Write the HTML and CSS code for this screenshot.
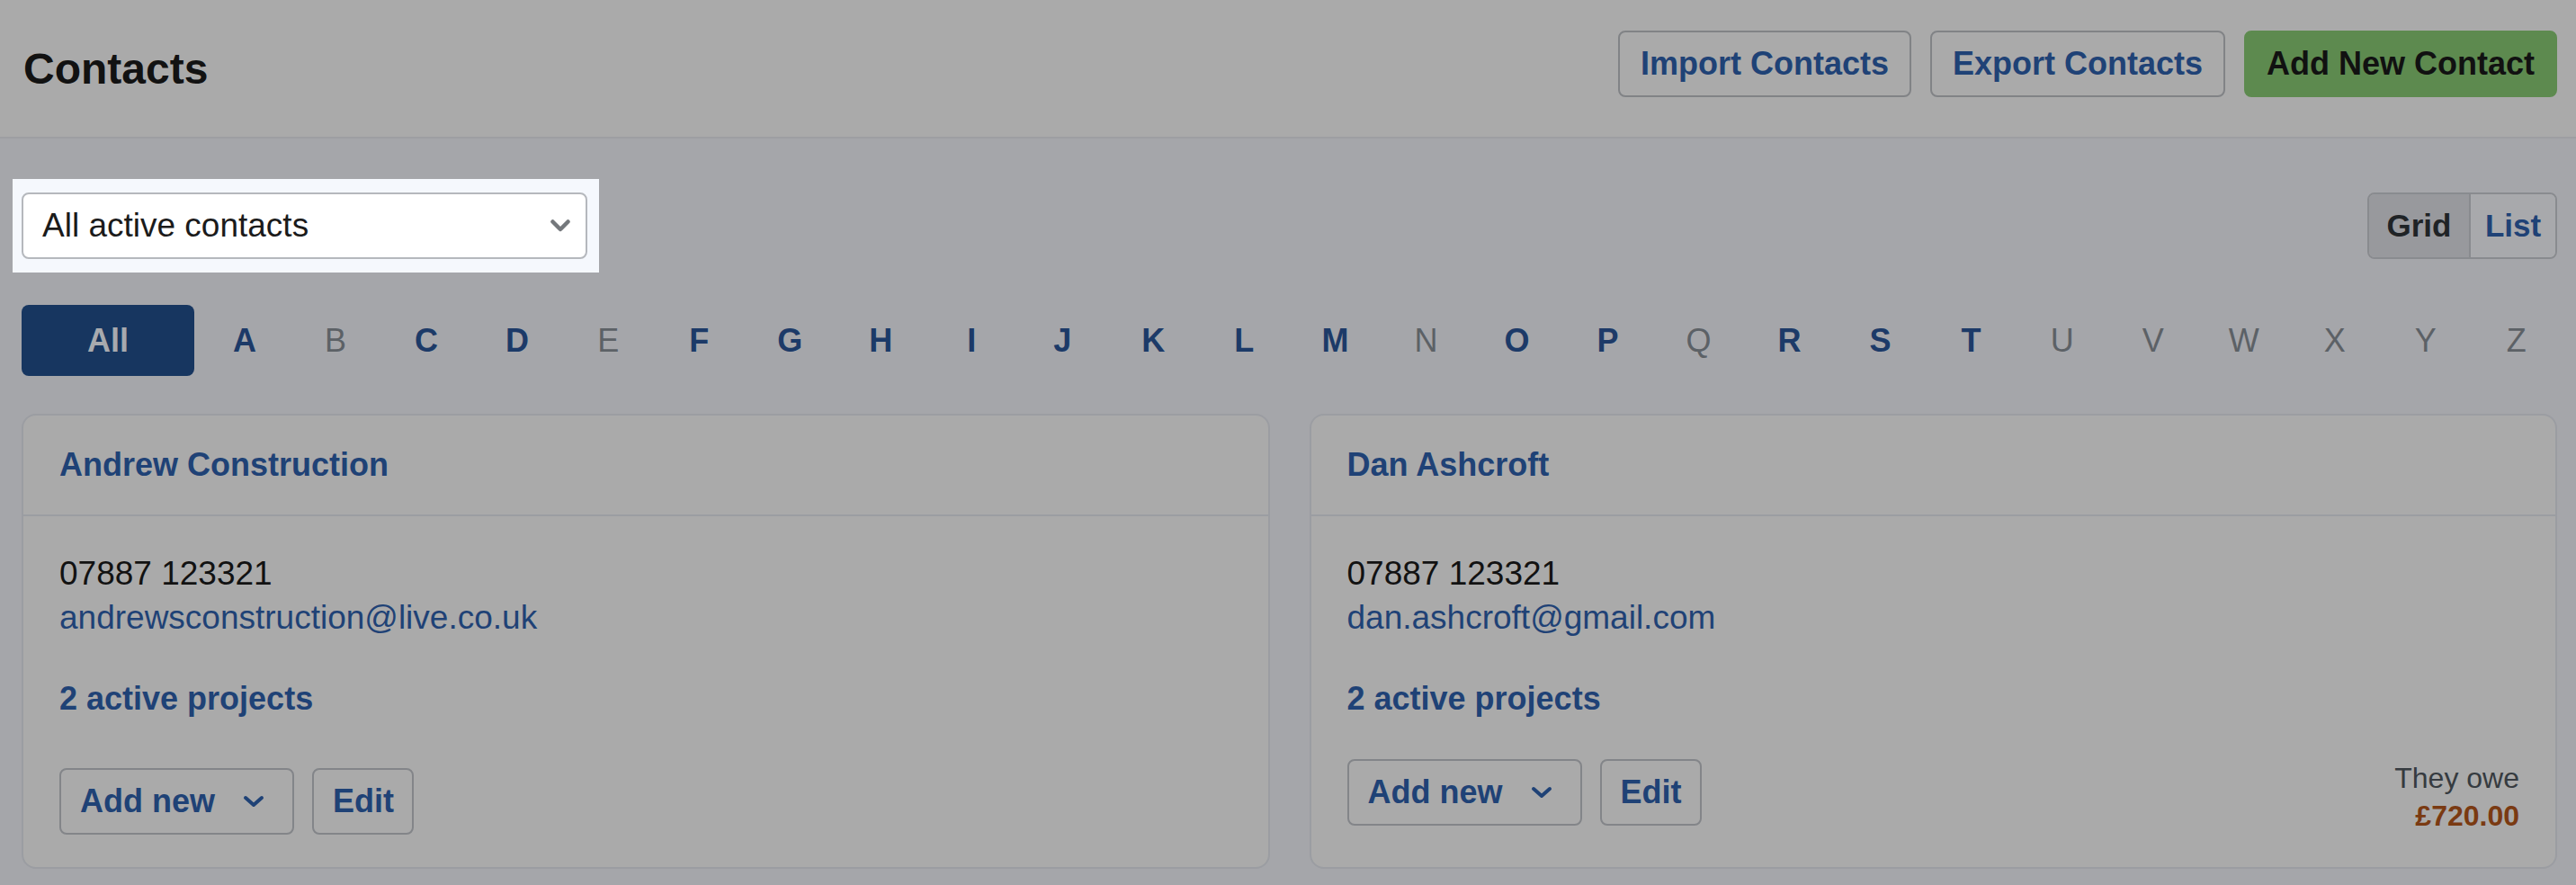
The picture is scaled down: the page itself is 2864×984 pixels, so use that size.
FILE: index.html
```html
<!DOCTYPE html>
<html lang="en">
<head>
<meta charset="utf-8">
<title>Contacts</title>
<link rel="stylesheet" href="styles.css">
</head>
<body>
<header class="topbar">
  <h1 class="title">Contacts</h1>
  <div class="actions">
    <button class="btn btn-outline">Import Contacts</button>
    <button class="btn btn-outline">Export Contacts</button>
    <button class="btn btn-green">Add New Contact</button>
  </div>
</header>
<main class="main">
  <div class="toolbar">
    <div class="spot">
      <div class="select">
        <span>All active contacts</span>
        <svg class="sel-chev" width="22" height="14" viewBox="0 0 22 14"><polyline points="2.5,2.5 11,11 19.5,2.5" fill="none" stroke="#74787c" stroke-width="4.5" stroke-linecap="round" stroke-linejoin="round"/></svg>
      </div>
    </div>
    <div class="toggle">
      <span class="tog tog-on">Grid</span>
      <span class="tog tog-off">List</span>
    </div>
  </div>
  <nav class="letters">
    <span class="all">All</span>
    <span class="letter">A</span>
    <span class="letter off">B</span>
    <span class="letter">C</span>
    <span class="letter">D</span>
    <span class="letter off">E</span>
    <span class="letter">F</span>
    <span class="letter">G</span>
    <span class="letter">H</span>
    <span class="letter">I</span>
    <span class="letter">J</span>
    <span class="letter">K</span>
    <span class="letter">L</span>
    <span class="letter">M</span>
    <span class="letter off">N</span>
    <span class="letter">O</span>
    <span class="letter">P</span>
    <span class="letter off">Q</span>
    <span class="letter">R</span>
    <span class="letter">S</span>
    <span class="letter">T</span>
    <span class="letter off">U</span>
    <span class="letter off">V</span>
    <span class="letter off">W</span>
    <span class="letter off">X</span>
    <span class="letter off">Y</span>
    <span class="letter off">Z</span>
  </nav>
  <section class="cards">
    <article class="card">
      <div class="card-head">Andrew Construction</div>
      <div class="card-body">
        <div class="phone">07887 123321</div>
        <div class="email">andrewsconstruction@live.co.uk</div>
        <div class="projects">2 active projects</div>
        <div class="foot">
          <div class="btns">
            <button class="sbtn">Add new
              <svg width="26" height="16" viewBox="0 0 26 16"><polyline points="4,4 13,12 22,4" fill="none" stroke="#1f4276" stroke-width="4" stroke-linecap="round" stroke-linejoin="round"/></svg>
            </button>
            <button class="sbtn sbtn-edit">Edit</button>
          </div>
        </div>
      </div>
    </article>
    <article class="card">
      <div class="card-head">Dan Ashcroft</div>
      <div class="card-body">
        <div class="phone">07887 123321</div>
        <div class="email">dan.ashcroft@gmail.com</div>
        <div class="projects">2 active projects</div>
        <div class="foot">
          <div class="btns">
            <button class="sbtn">Add new
              <svg width="26" height="16" viewBox="0 0 26 16"><polyline points="4,4 13,12 22,4" fill="none" stroke="#1f4276" stroke-width="4" stroke-linecap="round" stroke-linejoin="round"/></svg>
            </button>
            <button class="sbtn sbtn-edit">Edit</button>
          </div>
          <div class="owe">
            <div class="owe-label">They owe</div>
            <div class="owe-amount">£720.00</div>
          </div>
        </div>
      </div>
    </article>
  </section>
</main>
</body>
</html>
```
FILE: styles.css
```css
* { box-sizing: border-box; }
html, body { margin: 0; padding: 0; }
body {
  background: #a5a6aa;
  font-family: "Liberation Sans", Arial, sans-serif;
  color: #121212;
  width: 2864px;
  height: 984px;
  overflow: hidden;
}
button { font-family: inherit; }

.topbar {
  height: 154px;
  background: #aaaaaa;
  border-bottom: 2px solid #9d9ea2;
  display: flex;
  align-items: center;
  justify-content: space-between;
  padding: 0 21px 0 26px;
}
.title {
  margin: 0;
  font-size: 48px;
  font-weight: 700;
  color: #121212;
}
.actions {
  display: flex;
  gap: 21px;
  margin-bottom: 10px;
}
.btn {
  height: 74px;
  padding: 0 23px;
  font-size: 36px;
  font-weight: 700;
  border-radius: 8px;
  cursor: pointer;
}
.btn-outline {
  background: transparent;
  border: 2px solid #818386;
  color: #1f4276;
}
.btn-green {
  background: #5d8a4f;
  border: 2px solid #5d8a4f;
  color: #111111;
}

.main {
  padding: 60px 21px 0 24px;
}
.toolbar {
  display: flex;
  align-items: center;
  justify-content: space-between;
  height: 74px;
}
.spot {
  background: #f5f8fd;
  padding: 15px 13px 15px 10px;
  margin: -15px -13px -15px -10px;
}
.select {
  width: 629px;
  height: 74px;
  border: 2px solid #b5b8bd;
  border-radius: 8px;
  background: #ffffff;
  display: flex;
  align-items: center;
  justify-content: space-between;
  padding: 0 17px 0 21px;
  font-size: 37px;
  color: #1b1b1b;
}
.toggle {
  display: flex;
  height: 74px;
  border: 2px solid #898b8f;
  border-radius: 8px;
  overflow: hidden;
}
.tog {
  display: flex;
  align-items: center;
  justify-content: center;
  font-size: 35px;
  font-weight: 700;
}
.tog-on {
  width: 111px;
  background: #98999d;
  color: #1f2326;
}
.tog-off {
  width: 96px;
  color: #1f4276;
  border-left: 2px solid #898b8f;
  background: #a8a9ac;
}

.letters {
  margin-top: 51px;
  display: flex;
  gap: 11px;
  height: 79px;
}
.all {
  width: 192px;
  flex: none;
  background: #173660;
  border-radius: 8px;
  color: #a8aaae;
  font-size: 36px;
  font-weight: 700;
  display: flex;
  align-items: center;
  justify-content: center;
}
.letter {
  flex: 1;
  display: flex;
  align-items: center;
  justify-content: center;
  font-size: 36px;
  font-weight: 700;
  color: #1c3a68;
}
.letter.off {
  font-weight: 400;
  color: #5c6166;
}

.cards {
  margin-top: 42px;
  display: grid;
  grid-template-columns: 1fr 1fr;
  gap: 44px;
}
.card {
  background: #aaaaaa;
  border: 2px solid #9b9da2;
  border-radius: 16px;
  display: flex;
  flex-direction: column;
  height: 506px;
}
.card-head {
  height: 112px;
  padding: 0 40px;
  display: flex;
  align-items: center;
  border-bottom: 2px solid #9b9da2;
  font-size: 36px;
  font-weight: 700;
  color: #1f4276;
}
.card-body {
  flex: 1;
  display: flex;
  flex-direction: column;
  padding: 39px 40px 36px;
}
.phone, .email {
  font-size: 37px;
  line-height: 49px;
}
.phone { color: #121212; }
.email { color: #1f4276; }
.projects {
  margin-top: 41px;
  margin-bottom: 32px;
  font-size: 36px;
  line-height: 49px;
  font-weight: 700;
  color: #1f4276;
}
.foot {
  margin-top: auto;
  display: flex;
  align-items: center;
  justify-content: space-between;
}
.btns {
  display: flex;
  gap: 20px;
}
.sbtn {
  height: 74px;
  background: transparent;
  border: 2px solid #838589;
  border-radius: 8px;
  padding: 0 30px 0 21px;
  font-size: 36px;
  font-weight: 700;
  color: #1f4276;
  display: flex;
  align-items: center;
  gap: 30px;
}
.sbtn-edit {
  padding: 0 20px 0 21px;
}
.owe {
  text-align: right;
  padding-top: 10px;
  line-height: 42px;
  font-size: 32px;
}
.owe-label { color: #363b40; }
.owe-amount { color: #7a3a12; font-weight: 700; }
```
